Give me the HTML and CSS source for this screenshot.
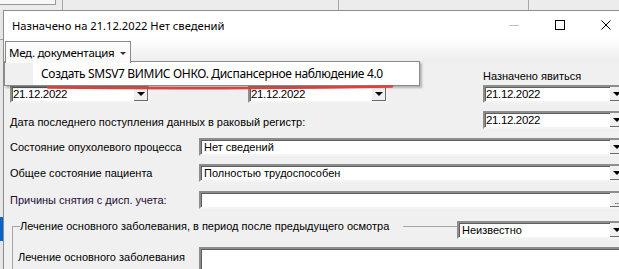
FILE: index.html
```html
<!DOCTYPE html>
<html lang="ru">
<head>
    <meta charset="UTF-8">
    <title>Назначено на 21.12.2022 Нет сведений</title>
    <link rel="stylesheet" href="styles.css">
</head>
<body>
    <div class="screen">
        <div class="backbar">
            <div class="bb-box"></div>
            <div class="bb-sep s1"></div>
            <div class="bb-sep s2"></div>
            <div class="bb-sep s3"></div>
        </div>

        <div class="desk">
            <div class="backside">
                <div class="bs-line"></div>
                <div class="bs-sel"></div>
            </div>

            <div class="dialog">
                <div class="titlebar">
                    <span class="caption">Назначено на 21.12.2022 Нет сведений</span>
                    <div class="winctl">
                        <div class="wbtn"><span class="g-min"></span></div>
                        <div class="wbtn"><span class="g-max"></span></div>
                        <div class="wbtn">
                            <svg width="10" height="10" viewBox="0 0 10 10"><path d="M0.5 0.5L9.5 9.5M9.5 0.5L0.5 9.5" stroke="#000" stroke-width="1"/></svg>
                        </div>
                    </div>
                </div>

                <div class="toolbar">
                    <div class="menubtn">Мед. документация <i class="caret"></i></div>
                    <div class="menu">
                        <div class="menu-icons"></div>
                        <div class="menu-item">Создать SMSV7 ВИМИС ОНКО. Диспансерное наблюдение 4.0</div>
                    </div>
                    <svg class="mark" width="360" height="8" viewBox="0 0 360 8">
                        <path d="M1 4.5 Q 170 6.5 345 3.5" stroke="#e0403a" stroke-width="2.4" fill="none" stroke-linecap="round"/>
                    </svg>
                </div>

                <div class="form">
                    <div class="dates">
                        <div class="dcol c1">
                            <div class="lbl"></div>
                            <div class="combo date"><span>21.12.2022</span><b class="drop"></b></div>
                        </div>
                        <div class="dcol c2">
                            <div class="lbl"></div>
                            <div class="combo date"><span>21.12.2022</span><b class="drop"></b></div>
                        </div>
                        <div class="dcol c3">
                            <div class="lbl">Назначено явиться</div>
                            <div class="combo date"><span>21.12.2022</span><b class="drop"></b></div>
                        </div>
                    </div>

                    <div class="row reg">
                        <div class="lbl">Дата последнего поступления данных в раковый регистр:</div>
                        <div class="combo date"><span>21.12.2022</span><b class="drop"></b></div>
                    </div>

                    <div class="row">
                        <div class="lbl wide">Состояние опухолевого процесса</div>
                        <div class="combo list"><span>Нет сведений</span><b class="drop"></b></div>
                    </div>

                    <div class="row">
                        <div class="lbl wide">Общее состояние пациента</div>
                        <div class="combo list"><span>Полностью трудоспособен</span><b class="drop"></b></div>
                    </div>

                    <div class="row r5">
                        <div class="lbl wide purple">Причины снятия с дисп. учета:</div>
                        <div class="combo list"><span></span><b class="dots">..</b></div>
                    </div>

                    <div class="group">
                        <div class="group-head">
                            <div class="gh-lead"></div>
                            <span class="gh-title">Лечение основного заболевания, в период после предыдущего осмотра</span>
                            <div class="gh-line"></div>
                            <div class="combo list gh-combo"><span>Неизвестно</span><b class="drop"></b></div>
                        </div>
                        <div class="group-body">
                            <div class="lbl inner">Лечение основного заболевания</div>
                            <div class="memo"></div>
                        </div>
                    </div>
                </div>
            </div>
        </div>
    </div>
</body>
</html>
```

FILE: styles.css
```css
body {
    margin: 0;
    background: #ececec;
    overflow: hidden;
    font-family: "Liberation Sans", Arial, sans-serif;
    font-size: 11px;
    color: #000;
}

.screen {
    width: 619px;
    height: 269px;
    overflow: hidden;
}

/* window behind the dialog */
.backbar {
    display: flex;
    height: 10px;
    background: #ececec;
}

.bb-box {
    width: 55px;
    height: 4px;
    background: #f7f7f7;
    border-right: 1px solid #9a9a9a;
    border-bottom: 1px solid #9a9a9a;
}

.bb-sep {
    border-left: 1px solid #a8a8a8;
}

.bb-sep.s1 { margin-left: 6px; }
.bb-sep.s2 { margin-left: 275px; }
.bb-sep.s3 { margin-left: 189px; }

.desk {
    display: flex;
}

.backside {
    width: 3px;
    flex: none;
    background: #e6e6e6;
}

.bs-line {
    height: 29px;
    border-bottom: 1px solid #a0a0a0;
}

.bs-sel {
    margin-top: 177px;
    height: 24px;
    background: #0a64c8;
}

/* dialog */
.dialog {
    width: 625px;
    flex: none;
    border: 1px solid #8c8c8c;
    border-right: none;
    background: #f0f0f0;
    height: 300px;
}

.titlebar {
    display: flex;
    align-items: center;
    height: 27px;
    background: #fff;
    padding-left: 8px;
}

.caption {
    flex: 1;
    font-family: "Noto Sans", "Open Sans", sans-serif;
    font-size: 11.2px;
    padding-top: 1px;
}

.winctl {
    display: flex;
    height: 27px;
}

.wbtn {
    width: 46px;
    display: flex;
    align-items: center;
    justify-content: center;
}

.g-min {
    width: 10px;
    height: 1px;
    background: #c4c4c4;
    margin-top: 1px;
}

.g-max {
    width: 8px;
    height: 8px;
    border: 1px solid #000;
}

.toolbar {
    position: relative;
    height: 21px;
    padding: 3px 0 0 1px;
    background: linear-gradient(#ffffff, #ededed);
}

.menubtn {
    position: relative;
    z-index: 3;
    display: flex;
    align-items: center;
    box-sizing: border-box;
    width: 126px;
    height: 22px;
    padding: 0 4px 0 3px;
    border: 1px solid #8a8a8a;
    border-bottom: none;
    background: #fbfbfb;
    white-space: nowrap;
    font-family: "Noto Sans", "Open Sans", sans-serif;
    font-size: 11.5px;
    letter-spacing: -0.3px;
}

.caret {
    margin-left: auto;
    margin-top: 1px;
    border-left: 3px solid transparent;
    border-right: 3px solid transparent;
    border-top: 3px solid #333;
}

.menu {
    position: absolute;
    z-index: 2;
    left: 0;
    top: 23px;
    width: 414px;
    height: 23px;
    display: flex;
    border: 1px solid #8a8a8a;
    background: #fff;
    box-shadow: 2px 2px 2px rgba(0, 0, 0, 0.25);
}

.menu-icons {
    width: 28px;
    background: #f0f0f0;
}

.menu-item {
    padding-left: 8px;
    line-height: 23px;
    white-space: nowrap;
    font-family: "Noto Sans", "Open Sans", sans-serif;
    font-size: 12px;
    letter-spacing: -0.33px;
}

.mark {
    position: absolute;
    z-index: 4;
    left: 43px;
    top: 45px;
}

/* form */
.form {
    padding: 6px 3px 0 6px;
}

.lbl {
    line-height: 16px;
    height: 16px;
    white-space: nowrap;
}

.dates {
    display: flex;
}

.dcol .combo {
    margin-top: 1px;
}

.dcol.c1 { width: 140px; }
.dcol.c2 { width: 140px; margin-left: 98px; }
.dcol.c3 { flex: 1; margin-left: 95px; }

.combo {
    display: flex;
    align-items: center;
    height: 14px;
    background: #fff;
    border: 2px solid;
    border-color: #8d8d8d #f4f4f4 #f4f4f4 #8d8d8d;
    box-shadow: inset 1px 1px 0 #5f5f5f;
    font-size: 11.5px;
    letter-spacing: -0.35px;
}

.combo span {
    flex: 1;
    padding-left: 1px;
    white-space: nowrap;
}

.combo.list span {
    padding-left: 3px;
    font-size: 11px;
    letter-spacing: 0;
}

.drop, .dots {
    width: 14px;
    height: 14px;
    flex: none;
    background: #f0f0f0;
    border-right: 1px solid #6a6a6a;
    border-bottom: 1px solid #6a6a6a;
    box-sizing: border-box;
    display: flex;
    align-items: center;
    justify-content: center;
}

.drop::after {
    content: "";
    border-left: 4px solid transparent;
    border-right: 4px solid transparent;
    border-top: 4px solid #000;
    margin-top: 1px;
}

.dots {
    font-weight: normal;
    font-size: 9px;
    align-items: flex-end;
    line-height: 9px;
    color: #000;
    letter-spacing: -0.5px;
    overflow: hidden;
}

.row {
    display: flex;
    align-items: center;
    margin-top: 8px;
}

.row.reg {
    align-items: flex-start;
}

.row.reg .lbl {
    margin-top: 3px;
    flex: 1;
}

.row.reg .combo {
    width: 139px;
}

.row.r5 {
    margin-top: 9px;
}

.lbl.wide {
    width: 189px;
    flex: none;
}

.row .combo.list {
    flex: 1;
}

.purple {
    color: #1e0c38;
}

.group {
    margin: 9px 0 0 2px;
}

.group-head {
    display: flex;
    align-items: flex-start;
    height: 21px;
}

.gh-lead {
    width: 7px;
    align-self: stretch;
    margin-top: 8px;
    border-top: 1px solid #a6a6a6;
    border-left: 1px solid #a6a6a6;
}

.gh-title {
    line-height: 16px;
    white-space: nowrap;
}

.gh-line {
    flex: 1;
    margin: 8px 0 0 14px;
    border-top: 1px solid #a6a6a6;
}

.gh-combo {
    flex: none;
    width: 165px;
    margin-top: 3px;
}

.group-body {
    display: flex;
    align-items: flex-start;
    border-left: 1px solid #a6a6a6;
    padding: 8px 0 0 5px;
    height: 40px;
}

.lbl.inner {
    width: 181px;
    margin-top: 2px;
}

.memo {
    flex: 1;
    height: 40px;
    background: #fff;
    border: 2px solid;
    border-color: #8d8d8d #f4f4f4 #f4f4f4 #8d8d8d;
    box-shadow: inset 1px 1px 0 #5f5f5f;
}
```
